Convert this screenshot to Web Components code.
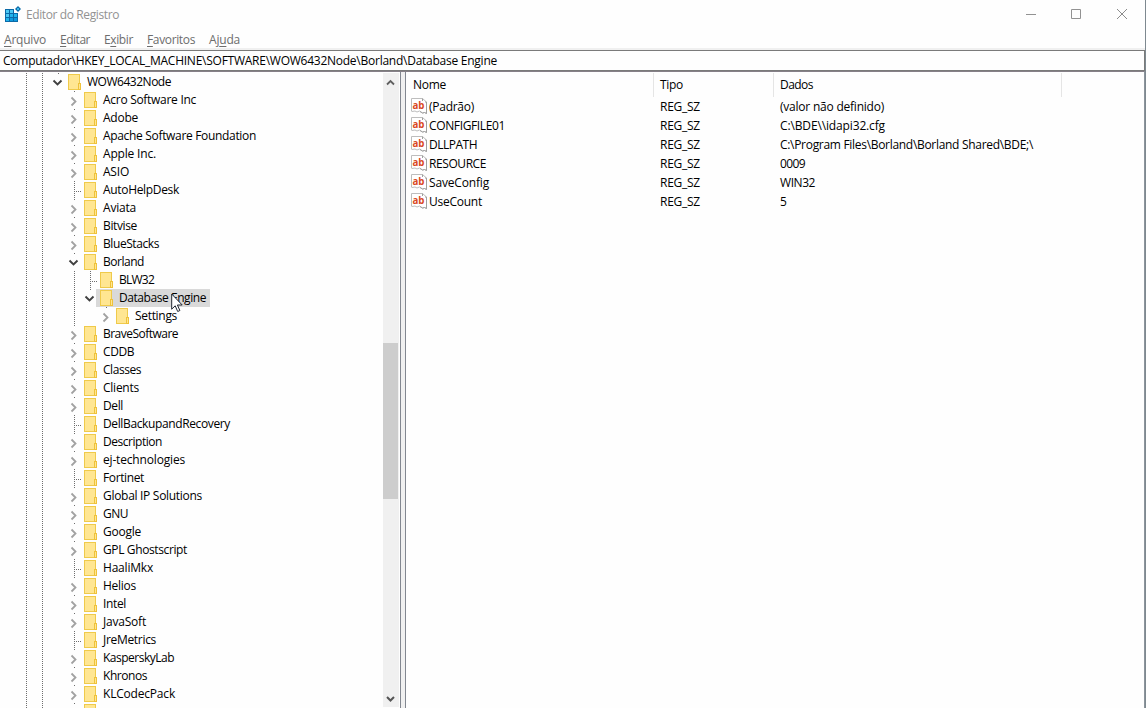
<!DOCTYPE html>
<html lang="pt-BR">
<head>
<meta charset="utf-8">
<title>Editor do Registro</title>
<style>
html,body{margin:0;height:100%;overflow:hidden;background:#fff}
body{font:12px/18px "Open Sans","Noto Sans",sans-serif;color:#000}
</style>
</head>
<body>
<reg-window></reg-window>
<script>
class Base extends HTMLElement {
  constructor() { super(); this.attachShadow({ mode: 'open' }); }
  connectedCallback() { this.shadowRoot.innerHTML = this.render(); this.after && this.after(); }
}

/* Label tightened to a given advance width. */
customElements.define('fit-text', class extends Base {
  render() {
    return `<style>:host{display:block;white-space:pre;flex:none}span{display:inline-block}</style><span><slot></slot></span>`;
  }
  after() {
    const want = +this.getAttribute('w');
    const span = this.shadowRoot.querySelector('span');
    const n = this.textContent.length;
    const have = span.getBoundingClientRect().width;
    if (want && have && n) span.style.letterSpacing = ((want - have) / n) + 'px';
  }
});

customElements.define('title-bar', class extends Base {
  render() {
    return `<style>
      :host{display:flex;height:30px;align-items:flex-start;color:#929292}
      .logo{margin:6px 0 0 5px;width:16px;height:17px;flex:none}
      fit-text{margin:6px 0 0 5px}
      .gap{flex:1}
      .btn{width:46px;height:30px;flex:none}
      </style>
      <svg class="logo" viewBox="0 0 16 17" shape-rendering="crispEdges">
        <path fill="#0b6aa8" d="M0 3h9v4h4v9H0z"/>
        <path fill="#4cc8f4" d="M1 4h3v3H1zM5 4h3v3H5zM1 8h3v3H1z"/>
        <path fill="#22b4ec" d="M5 8h3v3H5zM9 8h3v3H9zM1 12h3v3H1z"/>
        <path fill="#0d9ade" d="M5 12h3v3H5zM9 12h3v3H9z"/>
        <path fill="#0b6aa8" shape-rendering="auto" d="M13 0l3 3-3 3-3-3z"/><path fill="#3bb9e8" d="M12 2h2v2h-2z"/>
      </svg>
      <fit-text w="93">Editor do Registro</fit-text><span class="gap"></span>
      <svg class="btn" viewBox="0 0 46 30"><path d="M19 14.500h10" stroke="#929292"/></svg>
      <svg class="btn" viewBox="0 0 46 30"><path d="M18.500 9.500h9v9h-9z" fill="none" stroke="#929292"/></svg>
      <svg class="btn" viewBox="0 0 46 30"><path d="M18 9l10 10M28 9L18 19" stroke="#8c8c8c"/></svg>`;
  }
});

customElements.define('menu-bar', class extends Base {
  render() {
    const items = [['<u>A</u>rquivo', 42, 14], ['<u>E</u>ditar', 30, 14], ['E<u>x</u>ibir', 29, 14], ['<u>F</u>avoritos', 48, 14], ['Aj<u>u</u>da', 31, 0]];
    return `<style>:host{display:flex;height:18px;box-sizing:border-box;padding:1px 0 0 4px;color:#6d6d6d}u{text-underline-offset:2px;text-decoration-thickness:1px;text-decoration-skip-ink:none}</style>` +
      items.map(([t, w, g]) => `<fit-text w="${w}" style="margin-right:${g}px">${t}</fit-text>`).join('');
  }
});

customElements.define('address-bar', class extends Base {
  render() {
    return `<style>:host{display:flex;box-sizing:border-box;height:23px;border-top:2px solid #f0f0f0}
      div{flex:1;box-sizing:border-box;height:21px;border:solid #7a7a7a;border-width:1px 1px 1px 0;padding:1px 0 0 3px}</style>
      <div><fit-text w="494">${this.textContent}</fit-text></div>`;
  }
});

customElements.define('folder-icon', class extends Base {
  render() {
    return `<style>:host{display:block;width:13px;height:16px;flex:none}svg{display:block}</style>
      <svg width="13" height="16" viewBox="0 0 13 16" shape-rendering="crispEdges">
      <path d="M.5.5h11v15H.5z" fill="#ffe692" stroke="#efca4b"/><path d="M10.500 9.500h2v6h-2z" fill="#ffe692" stroke="#efc23a"/></svg>`;
  }
});

customElements.define('tree-row', class extends Base {
  render() {
    const d = +this.getAttribute('depth'), k = this.getAttribute('kind'), sel = this.hasAttribute('selected');
    const cx = 57 + d * 16;
    const line = (x, a, b) => `<path d="M${x + .5} ${a}V${b}" stroke="#6e6e6e" stroke-dasharray="1 1"/>`;
    let s = line(26, 0, 18) + line(42, 0, 18);
    if (d > 1) s += line(74, 0, 18);
    if (k === 'leaf') s += line(cx + 1, 0, 18) + `<path d="M${cx + 3} 10.500h5" stroke="#6e6e6e" stroke-dasharray="1 1"/>`;
    else s += `<path d="M${cx + 1} .5h1" stroke="#6e6e6e"/>`;
    if (k === 'closed') s += `<path d="M${cx - 1.500} 6.500l4 4-4 4" fill="none" stroke="#a2a2a2" stroke-width="1.800"/>`;
    if (k === 'open') s += `<path d="M${cx - 3.500} 7.500l4 4 4-4" fill="none" stroke="#404040" stroke-width="1.900"/>`;
    return `<style>
      :host{display:flex;height:18px;flex:none}
      svg{flex:none;display:block;overflow:visible}
      .item{display:flex;align-items:flex-start;height:18px;padding:1px 4px 0 4px;box-sizing:border-box}
      .sel{background:#d9d9d9}
      fit-text{margin:-1px 0 0 6px}
      </style><svg width="${cx + 7}" height="18">${s}</svg>
      <div class="item ${sel ? 'sel' : ''}"><folder-icon></folder-icon><fit-text w="${this.getAttribute('w')}">${this.textContent}</fit-text></div>`;
  }
});

const rows = [
  [0,'open','WOW6432Node',84],[1,'closed','Acro Software Inc',93],[1,'closed','Adobe',35],[1,'closed','Apache Software Foundation',153],
  [1,'closed','Apple Inc.',53],[1,'closed','ASIO',26],[1,'leaf','AutoHelpDesk',76],[1,'closed','Aviata',33],[1,'closed','Bitvise',34],
  [1,'closed','BlueStacks',56],[1,'open','Borland',41],[2,'leaf','BLW32',35],[2,'open','Database Engine',87],[3,'closed','Settings',42],
  [1,'closed','BraveSoftware',75],[1,'closed','CDDB',31],[1,'closed','Classes',38],[1,'closed','Clients',36],[1,'closed','Dell',20],
  [1,'leaf','DellBackupandRecovery',127],[1,'closed','Description',59],[1,'closed','ej-technologies',82],[1,'leaf','Fortinet',41],
  [1,'closed','Global IP Solutions',99],[1,'closed','GNU',25],[1,'closed','Google',38],[1,'closed','GPL Ghostscript',84],[1,'leaf','HaaliMkx',50],
  [1,'closed','Helios',33],[1,'closed','Intel',23],[1,'closed','JavaSoft',43],[1,'leaf','JreMetrics',53],[1,'closed','KasperskyLab',71],
  [1,'closed','Khronos',44],[1,'closed','KLCodecPack',72]];

customElements.define('key-tree', class extends Base {
  render() {
    return `<style>:host{display:flex;flex-direction:column;width:383px;flex:none;overflow:hidden;padding-top:1px;box-sizing:border-box}
      .next{display:flex;height:5px;box-sizing:border-box;overflow:hidden;padding-top:1px;flex:none}svg{flex:none;margin-top:-1px}</style>` +
      rows.map(([d, k, t, w]) => `<tree-row depth="${d}" kind="${k}" w="${w}" ${t === 'Database Engine' ? 'selected' : ''}>${t}</tree-row>`).join('') +
      `<div class="next"><svg width="84" height="6"><path d="M26.500 0v6M42.500 0v6M74.500 0v1" stroke="#6e6e6e" stroke-dasharray="1 1"/></svg><folder-icon></folder-icon></div>`;
  }
});

customElements.define('scroll-bar', class extends Base {
  render() {
    return `<style>:host{display:flex;flex-direction:column;width:16px;flex:none;background:#f0f0f0;margin:1px 0}
      .up{height:270px;flex:none}.thumb{width:15px;height:156px;background:#cdcdcd;flex:none}.gap{flex:1}svg{display:block}</style>
      <div class="up"><svg width="16" height="17"><path d="M4 11.500L7.500 8l3.500 3.500" fill="none" stroke="#606060" stroke-width="1.800"/></svg></div>
      <div class="thumb"></div><div class="gap"></div>
      <svg width="16" height="17"><path d="M4 7L7.500 10.500 11 7" fill="none" stroke="#555" stroke-width="2"/></svg>`;
  }
});

customElements.define('string-icon', class extends Base {
  render() {
    return `<style>:host{display:block;width:17px;height:16px;flex:none}svg{display:block;overflow:visible}text{font:bold 11px/12px "Open Sans",sans-serif}</style>
      <svg width="17" height="16" viewBox="0 0 17 16">
      <path d="M.5 13.500V.5h11l4 3.500v11.500l-2-1-2 .5-3-2-2.500 1-2-1-3 .5" fill="#fff" stroke="#bdbdbd"/>
      <path d="M11.500.5v3.500h4v11.500l-2-1-2 .5-2.500-1.500" fill="none" stroke="#a0a0a0"/>
      <path d="M9 3h5v8H9z" fill="#fff"/>
      <text x="1.500" y="10.500" fill="#d9481f" textLength="12" lengthAdjust="spacingAndGlyphs">ab</text></svg>`;
  }
});

const values = [
  ['(Padrão)',45,'(valor não definido)',104],['CONFIGFILE01',76,'C:\\BDE\\\\idapi32.cfg',105],
  ['DLLPATH',48,'C:\\Program Files\\Borland\\Borland Shared\\BDE;\\',253],['RESOURCE',57,'0009',25],
  ['SaveConfig',60,'WIN32',35],['UseCount',53,'5',6]];

customElements.define('value-list', class extends Base {
  render() {
    return `<style>
      :host{display:block;flex:1;min-width:0}
      .head,.row{display:grid;grid-template-columns:248px 120px 288px 1fr}
      .head{height:26px;padding-top:1px;box-sizing:border-box}
      .head>div{box-sizing:border-box;height:24px;border-right:1px solid #e5e5e5;padding:3px 0 0 6px}
      .head>div:first-child{padding-left:7px}
      .row{height:19px}
      .row>fit-text{padding-left:6px}
      .name{display:flex;padding-left:5px}
      .name fit-text{margin-left:1px}
      </style>
      <div class="head"><div><fit-text w="33">Nome</fit-text></div><div><fit-text w="23">Tipo</fit-text></div><div><fit-text w="33">Dados</fit-text></div></div>` +
      values.map(([n, w, v, x]) => `<div class="row"><div class="name"><string-icon></string-icon><fit-text w="${w}">${n}</fit-text></div><fit-text w="40">REG_SZ</fit-text><fit-text w="${x}">${v}</fit-text></div>`).join('');
  }
});

customElements.define('mouse-cursor', class extends Base {
  render() {
    return `<style>:host{position:absolute;left:171px;top:293px}svg{display:block}</style>
      <svg width="13" height="20" viewBox="0 0 13 20"><path d="M.7 1v15.200l3.500-3.400 2.500 5.700 2.200-1-2.500-5.500h4.800z" fill="#fff" stroke="#222833"/></svg>`;
  }
});

customElements.define('reg-window', class extends Base {
  render() {
    return `<style>
      :host{display:flex;flex-direction:column;width:1146px;height:708px;box-sizing:border-box;border-right:1px solid #7e8990;background:#fefefe;position:relative;overflow:hidden}
      .body{flex:1;display:flex;min-height:0;border-top:1px solid #868088;border-right:1px solid #8c949c}
      .split{width:4px;background:#f0f0f0;border:solid #828790;border-width:0 1px;margin-left:1px;flex:none}
      </style>
      <title-bar></title-bar><menu-bar></menu-bar>
      <address-bar>Computador\\HKEY_LOCAL_MACHINE\\SOFTWARE\\WOW6432Node\\Borland\\Database Engine</address-bar>
      <div class="body"><key-tree></key-tree><scroll-bar></scroll-bar><div class="split"></div><value-list></value-list></div>
      <mouse-cursor></mouse-cursor>`;
  }
});
</script>
</body>
</html>
